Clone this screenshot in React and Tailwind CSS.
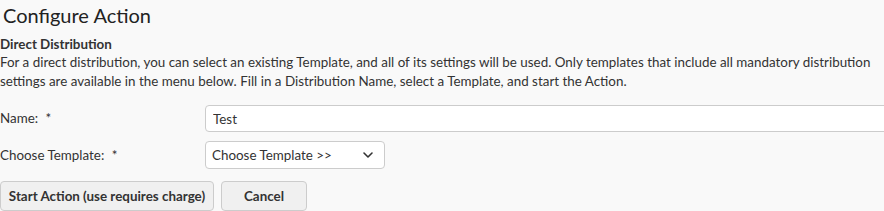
import React from 'react';

function App() {
  return (
    <div className="min-h-[211px] bg-[#f9f9f9] text-[#333] overflow-hidden" style={{ fontFamily: 'Lato, "Open Sans", sans-serif' }}>
      <h1 className="text-[20px] leading-[24px] pt-[3px] pl-[3px] text-[#222]">Configure Action</h1>
      <div className="mt-[9px] text-[13.4px] font-bold leading-[17px]">Direct Distribution</div>
      <p className="text-[13.4px] leading-[19px]">
        For a direct distribution, you can select an existing Template, and all of its settings will be used. Only templates that include all mandatory distribution settings are available in the menu below. Fill in a Distribution Name, select a Template, and start the Action.
      </p>

      <div className="mt-[14px] flex flex-col gap-[9px] text-[13.4px]">
        <div className="flex items-center">
          <label className="w-[205px] shrink-0">Name: <span className="ml-[4px]">*</span></label>
          <input
            defaultValue="Test"
            className="w-[720px] shrink-0 h-[27px] px-[7px] bg-white border border-[#ccc] rounded-[4px] outline-none text-[13.4px]"
          />
        </div>
        <div className="flex items-center">
          <label className="w-[205px] shrink-0">Choose Template: <span className="ml-[4px]">*</span></label>
          <div className="w-[180px] h-[28px] px-[6px] bg-white border border-[#ccc] rounded-[4px] flex items-center justify-between">
            <span>Choose Template &gt;&gt;</span>
            <svg width="12" height="12" viewBox="0 0 12 12" className="mr-[4px]">
              <path d="M2 4 L6 8 L10 4" fill="none" stroke="#333" strokeWidth="1.6" strokeLinecap="round" strokeLinejoin="round" />
            </svg>
          </div>
        </div>
      </div>

      <div className="mt-[12px] flex gap-[7px] text-[13.4px] font-bold">
        <button className="h-[30px] w-[214px] bg-[#f0f0f0] border border-[#ccc] rounded-[4px]">Start Action (use requires charge)</button>
        <button className="h-[30px] w-[86px] bg-[#f0f0f0] border border-[#ccc] rounded-[4px]">Cancel</button>
      </div>
    </div>
  );
}

export default App;
